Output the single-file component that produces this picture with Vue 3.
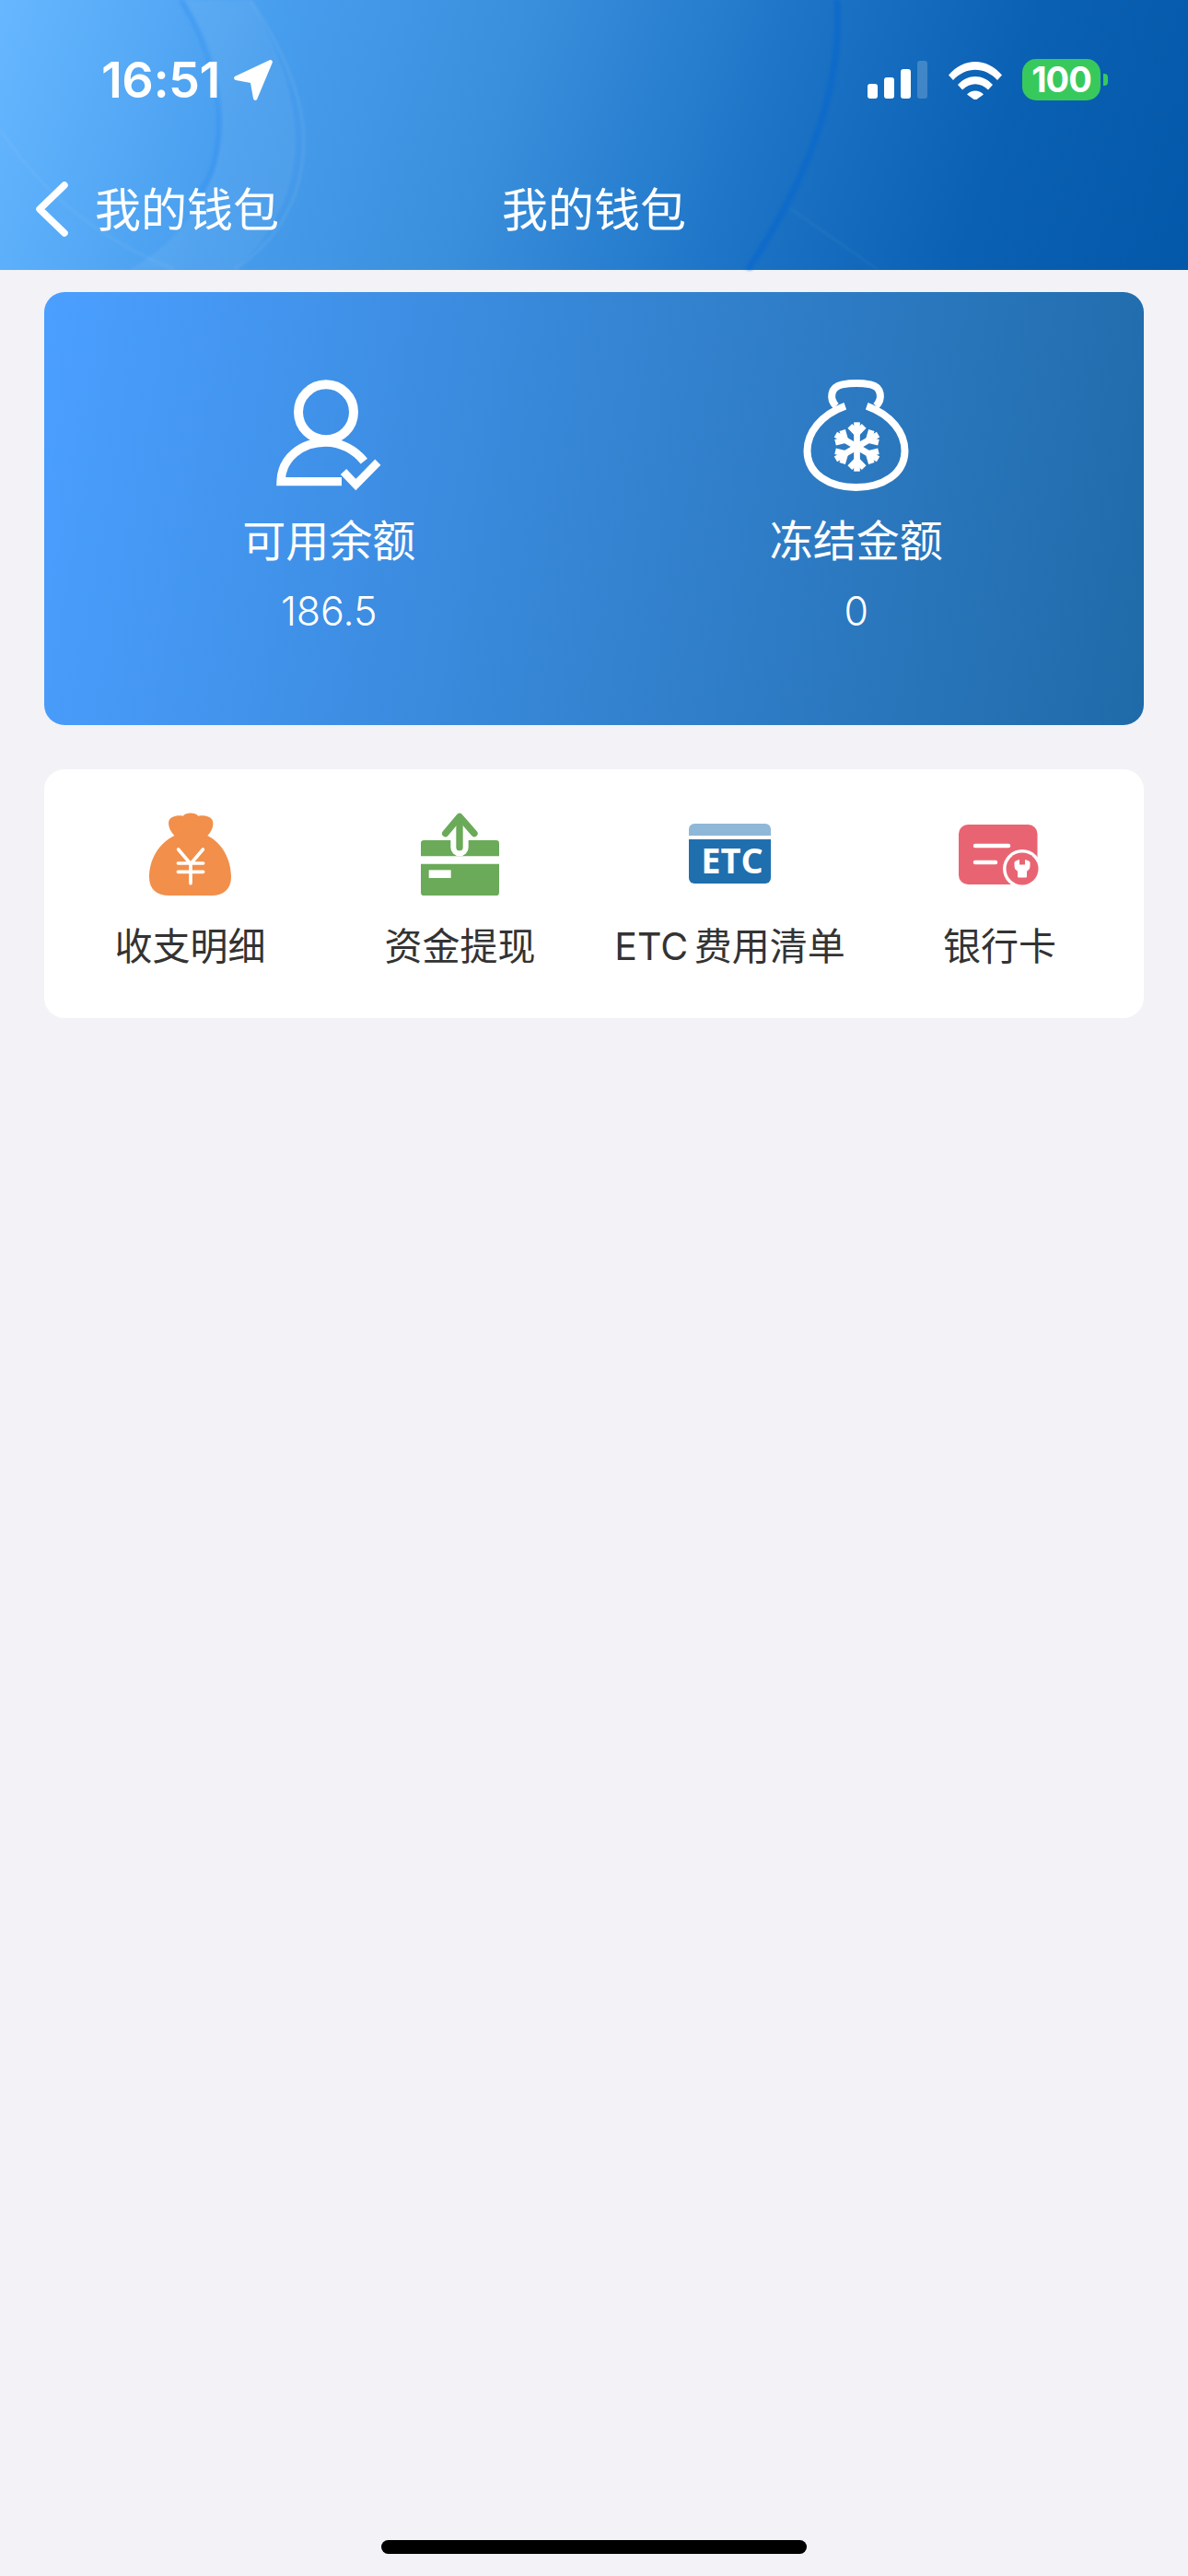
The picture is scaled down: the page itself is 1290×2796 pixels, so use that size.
<template>
  <div class="page">
    <header class="head">
      <!-- header background swirl -->
      <svg class="swirl" viewBox="0 0 1290 293" width="1290" height="293">
        <path d="M272 0C335 110 345 210 255 293L140 293C215 250 250 180 236 110C228 60 212 25 197 0Z" fill="#fff" opacity=".06" />
        <path d="M197 0C228 50 245 110 236 160C232 185 226 198 214 212" fill="none" stroke="#2f8ff0" stroke-width="6" opacity=".4" />
        <path d="M272 0C312 60 335 120 329 170C324 225 295 265 255 293" fill="none" stroke="#fff" stroke-width="3" opacity=".08" />
        <path d="M0 140C50 215 110 260 190 293" fill="none" stroke="#fff" stroke-width="3" opacity=".06" />
        <path d="M909 0C915 90 880 190 812 293" fill="none" stroke="#0a68cc" stroke-width="7" opacity=".7" />
        <path d="M859 227L954 293" fill="none" stroke="#fff" stroke-width="2" opacity=".06" />
      </svg>

      <div class="status">
        <div class="time-wrap">
          <span class="time">16:51</span>
          <svg class="loc" viewBox="0 0 42 42" width="46" height="46">
            <path d="M38 3L4 19L20 22L23 39Z" fill="#fff" stroke="#fff" stroke-width="4" stroke-linejoin="round" />
          </svg>
        </div>
        <div class="status-right">
          <div class="signal">
            <i class="b1"></i><i class="b2"></i><i class="b3"></i><i class="b4"></i>
          </div>
          <svg class="wifi" viewBox="0 0 58 42" width="58" height="42">
            <path d="M0 15.5C16 -4 42 -4 58 15.5L53 21C39 6 19 6 5 21Z" fill="#fff" />
            <path d="M10 26C21 14 37 14 48 26L43 31.500C34 23 24 23 15 31.500Z" fill="#fff" />
            <path d="M20 36.500C25 31 33 31 38 36.500L29 43Z" fill="#fff" />
          </svg>
          <div class="battery">
            <span class="batt-num">100</span>
            <i class="nub"></i>
          </div>
        </div>
      </div>

      <nav class="nav">
        <div class="back">
          <svg viewBox="0 0 40 60" width="40" height="60">
            <path d="M33 4L6 30L33 56" fill="none" stroke="#fff" stroke-width="7.500" stroke-linecap="round" stroke-linejoin="round" />
          </svg>
          <span>我的钱包</span>
        </div>
        <div class="title">我的钱包</div>
      </nav>
    </header>

    <section class="balance">
      <div class="bal-col">
        <svg viewBox="170 60 360 375" width="120" height="125">
          <circle cx="341" cy="172" r="90" fill="none" stroke="#fff" stroke-width="30" />
          <path d="M392 398H194C196 320 262 270 340 270C390 270 435 295 465 332" fill="none" stroke="#fff" stroke-width="28" />
          <path d="M398 366L438 408L510 335" fill="none" stroke="#fff" stroke-width="26" />
        </svg>
        <div class="bal-label">可用余额</div>
        <div class="bal-value">186.5</div>
      </div>
      <div class="bal-col">
        <svg viewBox="190 60 350 375" width="117" height="125">
          <path d="M330 152C250 180 206 240 206 298C206 375 280 417 365 417C450 417 524 375 524 298C524 240 480 180 400 152" fill="none" stroke="#fff" stroke-width="24" />
          <path d="M300 152C278 130 280 90 320 82C350 77 382 77 412 82C450 90 452 130 430 152" fill="none" stroke="#fff" stroke-width="24" />
          <g transform="translate(368 285)" fill="none" stroke="#fff" stroke-width="20">
            <g v-for="a in arms" :key="a" :transform="`rotate(${a})`">
              <path d="M0 0V-80" />
              <path d="M-23 -68L0 -44L23 -68" />
            </g>
          </g>
        </svg>
        <div class="bal-label">冻结金额</div>
        <div class="bal-value">0</div>
      </div>
    </section>

    <section class="menu">
      <div class="menu-item">
        <svg viewBox="180 65 267 270" width="89" height="90">
          <path d="M262 140C245 122 240 102 245 90C250 76 278 72 290 76C300 63 330 63 340 76C355 72 380 76 386 90C392 105 385 125 370 140C420 165 447 220 447 275C447 315 420 335 385 335H245C205 335 180 315 180 275C180 220 210 165 262 140Z" fill="#f28f4b" />
          <path d="M275 185L315 232L355 185M315 232V295M274 230H356M274 258H356" fill="none" stroke="#fff" stroke-width="11" stroke-linecap="round" />
        </svg>
        <span>收支明细</span>
      </div>
      <div class="menu-item">
        <svg viewBox="1072 65 255 270" width="85" height="90">
          <path d="M1082 155H1317A10 10 0 0 1 1327 165V207H1072V165A10 10 0 0 1 1082 155Z" fill="#6aaa58" />
          <path d="M1072 232H1327V325A10 10 0 0 1 1317 335H1082A10 10 0 0 1 1072 325Z" fill="#6aaa58" />
          <rect x="1098" y="252" width="72" height="26" fill="#fff" />
          <path d="M1198 100V178" fill="none" stroke="#fff" stroke-width="58" stroke-linecap="round" />
          <path d="M1198 85V178" fill="none" stroke="#6aaa58" stroke-width="22" stroke-linecap="round" />
          <path d="M1152 133L1198 78L1246 133" fill="none" stroke="#6aaa58" stroke-width="22" stroke-linecap="round" stroke-linejoin="round" />
        </svg>
        <span>资金提现</span>
      </div>
      <div class="menu-item">
        <svg viewBox="0 0 90 90" width="90" height="90">
          <path d="M6 12H83A6 6 0 0 1 89 18V25H0V18A6 6 0 0 1 6 12Z" fill="#8fb7d7" />
          <path d="M0 29H89V71A6 6 0 0 1 83 77H6A6 6 0 0 1 0 71Z" fill="#1f6fae" />
          <text x="47" y="66" text-anchor="middle" class="etc">ETC</text>
        </svg>
        <span class="etc-label">ETC 费用清单</span>
      </div>
      <div class="menu-item">
        <svg viewBox="0 0 90 90" width="90" height="90">
          <rect x="0" y="13" width="85.500" height="65" rx="10" fill="#e96472" />
          <path d="M18 36H54M18 54H40" fill="none" stroke="#fff" stroke-width="4.500" stroke-linecap="round" />
          <circle cx="69" cy="61" r="21" fill="#fff" />
          <circle cx="69" cy="61" r="17.500" fill="#e96472" />
          <path d="M61 53.500L65.500 51.500V57H72.500V51.500L77 53.500V58C77 61 75.500 62.500 73.500 63.500V70H64.500V63.500C62.500 62.500 61 61 61 58Z" fill="#fff" stroke="#fff" stroke-width="1" stroke-linejoin="round" />
        </svg>
        <span>银行卡</span>
      </div>
    </section>

    <div class="home-bar"></div>
  </div>
</template>

<script setup>
const arms = [0, 60, 120, 180, 240, 300]
</script>

<style>
html,
body {
  margin: 0;
  background: #f2f2f7;
}
</style>

<style scoped>
.page {
  position: relative;
  width: 1290px;
  height: 2796px;
  overflow: hidden;
  background: #f2f2f7;
  font-family: Inter, "Noto Sans CJK SC", sans-serif;
}

.head {
  position: relative;
  height: 293px;
  box-sizing: border-box;
  color: #fff;
  background: linear-gradient(108deg, #66b7ff 0%, #489eee 22%, #3a8fdc 42%, #1f76c8 62%, #0a60b2 82%, #0358aa 100%);
}

.swirl {
  position: absolute;
  left: 0;
  top: 0;
  filter: blur(1.500px);
}

.status {
  position: relative;
  display: flex;
  justify-content: space-between;
  align-items: center;
  height: 45px;
  padding: 64px 95px 0 110px;
}

.time-wrap {
  display: flex;
  align-items: center;
  gap: 13px;
}

.time {
  font-size: 54px;
  line-height: 45px;
  font-weight: 600;
  letter-spacing: -.500px;
}

.loc {
  display: block;
}

.status-right {
  display: flex;
  align-items: center;
}

.signal {
  display: flex;
  align-items: flex-end;
  gap: 7px;
  height: 41px;
  margin-right: 23px;
}

.signal i {
  display: block;
  width: 11px;
  border-radius: 3px;
  background: #fff;
}

.signal .b1 { height: 16px; }
.signal .b2 { height: 23px; }
.signal .b3 { height: 32px; }
.signal .b4 { height: 41px; opacity: .2; }

.wifi {
  display: block;
  margin-right: 22px;
}

.battery {
  position: relative;
  width: 85px;
  height: 45px;
  border-radius: 15px;
  background: #38c95c;
  text-align: center;
}

.batt-num {
  font-size: 38px;
  line-height: 45px;
  font-weight: 700;
  letter-spacing: -1px;
}

.nub {
  position: absolute;
  left: 88px;
  top: 16px;
  width: 5px;
  height: 13px;
  border-radius: 0 4px 4px 0;
  background: #38c95c;
}

.nav {
  position: relative;
  height: 60px;
  margin-top: 85px;
  display: flex;
  align-items: center;
  justify-content: center;
}

.back {
  position: absolute;
  left: 37px;
  top: 0;
  height: 60px;
  display: flex;
  align-items: center;
  gap: 26px;
  font-size: 50px;
}

.back svg {
  display: block;
  margin-top: 6px;
}

.title {
  font-size: 50px;
}

.balance {
  display: flex;
  justify-content: space-between;
  height: 470px;
  box-sizing: border-box;
  margin: 24px 48px 0;
  padding: 93px 26px 0 23px;
  border-radius: 22px;
  background: linear-gradient(100deg, #4b9fff 0%, #1f6aa8 100%);
  color: #fff;
}

.bal-col {
  width: 573px;
  display: flex;
  flex-direction: column;
  align-items: center;
}

.bal-col svg {
  display: block;
}

.bal-label {
  margin-top: 22px;
  font-size: 47px;
  line-height: 60px;
}

.bal-value {
  margin-top: 21px;
  font-size: 43px;
  line-height: 50px;
  font-weight: 300;
}

.menu {
  display: flex;
  height: 270px;
  box-sizing: border-box;
  margin: 48px 48px 0;
  padding: 47px 10px 0 12px;
  border-radius: 22px;
  background: #fff;
}

.menu-item {
  flex: 1;
  display: flex;
  flex-direction: column;
  align-items: center;
  gap: 27px;
  font-size: 41px;
  line-height: 56px;
  color: #333;
  white-space: nowrap;
}

.menu-item svg {
  display: block;
}

.etc-label {
  word-spacing: -5px;
}

.etc {
  font-family: "Open Sans", sans-serif;
  font-size: 38px;
  font-weight: 700;
  fill: #fff;
}

.home-bar {
  position: absolute;
  left: 414px;
  bottom: 24px;
  width: 462px;
  height: 15px;
  border-radius: 8px;
  background: #000;
}
</style>
